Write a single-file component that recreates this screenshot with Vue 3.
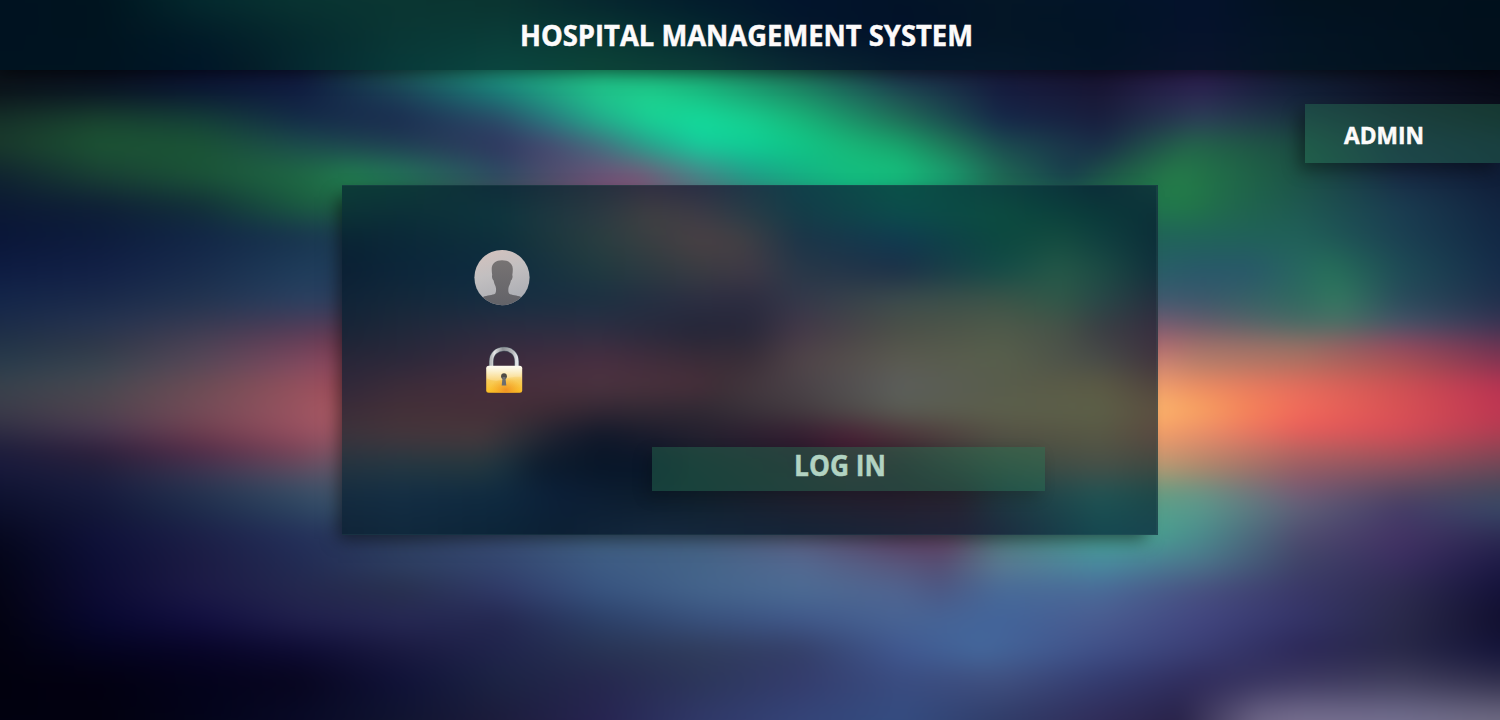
<script setup>
// Each surface is a colour mesh: rows at a given y, every row a list of "x:colour" stops.
// Rows are stacked and fade into each other from top to bottom.
const BLEED = 30

function mesh(originX, originY, rows) {
  return rows.map(([y, stops], i) => {
    const colours = stops
      .split(' ')
      .map((s) => {
        const [x, hex] = s.split(':')
        return `#${hex} ${Number(x) - originX + BLEED}px`
      })
      .join(', ')
    const style = { backgroundImage: `linear-gradient(to right, ${colours})` }
    if (i > 0) {
      const from = rows[i - 1][0] - originY + BLEED
      const to = y - originY + BLEED
      style.maskImage = `linear-gradient(to bottom, transparent ${from}px, #000 ${to}px)`
    }
    return style
  })
}

const sky = mesh(0, 0, [
  [70, '0:0a1018 100:080d1c 200:0a1030 300:10183c 400:1c5a58 500:1f9a80 600:20b880 700:1fa070 800:1f6a58 900:1a2a48 1000:171a3c 1100:171230 1200:2a1c4c 1300:101c30 1400:0c0f20 1500:050714'],
  [95, '0:0c161c 100:0c1a26 200:0c1c34 300:111f42 400:1c4058 500:1a7a78 560:20a884 600:20c48c 650:1ed28f 700:1ac184 800:1c8f68 900:1f4f54 1000:161e40 1100:191836 1150:242248 1200:2c2852 1250:1e2444 1300:14203a 1400:0e1226 1500:0a0c18'],
  [120, '0:16322a 100:194430 200:144038 300:142c48 400:1b2c50 500:2c4a68 550:287880 600:20ae8c 650:18d295 700:13dc9c 750:17d090 800:18b87a 900:207058 1000:16284a 1100:181e3e 1200:2c4058 1300:1a3440 1400:151c30 1500:0c1220'],
  [145, '0:1a3a2c 100:1c5434 200:1b5436 300:1c4c4c 400:203e54 500:303660 550:484870 600:446c80 650:24a48e 700:14ce9c 750:0ed096 800:10c888 850:18b878 900:18a46c 950:207858 1000:1c4c50 1100:1a2c48 1150:204e4a 1190:23664a 1300:1c4c42 1400:162440 1500:101c34'],
  [175, '0:102430 100:194034 200:1b5438 300:1f6a44 350:218050 400:24785a 500:2c4c64 600:6c5076 640:7a5478 700:4a8088 750:1f9c88 800:14b084 850:13c080 900:16c27e 950:1aa070 1000:1f6a54 1070:183c4c 1110:1e5848 1175:257d49 1230:206a48 1300:1c5246 1400:182a44 1500:0f1c36'],
  [205, '0:0c1a34 100:0f2036 200:123038 300:1a5c40 340:1f6444 400:1a5040 620:7c5270 850:14a07c 1000:1f6a54 1158:217a4c 1190:217848 1230:20684c 1300:1e5850 1400:1a3c50 1500:122440'],
  [235, '0:0a1638 100:0d1c3c 200:122646 300:18344e 340:1c3c54 1158:206458 1200:206458 1300:206058 1400:1b4052 1500:122844'],
  [270, '0:0e1c42 100:122046 200:182c4c 300:1e3c5a 340:203e5c 1158:285e68 1200:28586a 1250:28586a 1330:26705a 1400:1e4c56 1500:162c4a'],
  [300, '0:14264a 100:1a2a4a 200:223450 300:2a4060 340:2c4060 1158:405a70 1200:3c586c 1300:306a60 1340:337860 1400:2a4c5c 1500:20304c'],
  [325, '0:1c2c48 100:263450 200:383a52 300:4c3c58 340:543c58 1158:7a5c72 1200:6a5c6c 1300:4c6a66 1340:4c6e66 1400:485468 1500:3a3454'],
  [345, '0:223448 100:303848 200:4c4254 300:6c4058 340:783c52 1158:b06a70 1200:a2706a 1300:957066 1400:944860 1500:6a3452'],
  [365, '0:2a3c4c 100:384450 200:584858 300:804a60 340:904a60 1158:d08874 1200:b8806a 1300:b47060 1400:a85454 1500:8a3452'],
  [385, '0:38424c 100:484850 200:6c4c54 300:94505c 340:a04c5a 1158:f09c6c 1200:ee8a62 1300:e46c5c 1400:d05054 1500:b83452'],
  [410, '0:3c3c4a 100:50444e 200:744c58 300:9a5460 340:ac5a64 1158:fcb86c 1200:f8a460 1250:f68458 1300:f26c5a 1400:d85254 1500:c03652'],
  [430, '0:302e44 100:483850 200:704050 300:985060 340:a45866 1158:f8a068 1200:f09068 1300:ea5c5a 1400:d84c58 1500:b43c52'],
  [450, '0:1e1e3c 100:30203c 200:542c48 300:7c4458 340:885868 1158:d89870 1200:cc8a6c 1300:b86460 1400:b05058 1500:8e4454'],
  [470, '0:18193c 100:20203c 200:3c3450 300:5c4c60 340:605a6c 1158:b09c74 1200:a8886c 1300:945c64 1400:845060 1500:684858'],
  [490, '0:101432 100:181c40 200:263450 300:384e66 340:44566c 1158:6c9c80 1200:6c9484 1300:785a74 1400:584860 1500:44485c'],
  [510, '0:0c0f2c 100:131838 200:1e2c4c 300:2c4460 340:34506c 1158:56a08c 1200:58988c 1300:5c6078 1400:443c68 1500:384868'],
  [535, '0:070920 100:10123a 200:1c2048 300:24305a 400:2c3c5c 500:3a4c74 600:406080 700:466080 800:5c5c7c 900:5c3c60 950:644060 1000:4c7878 1100:48a090 1158:48a090 1200:4a8c8c 1300:504c70 1400:443464 1500:2e2c54'],
  [560, '0:04061a 100:0d0f36 200:1c1c44 300:222c54 400:2e4064 500:344870 600:3e5c84 700:446488 800:546890 900:5a5478 940:584c70 1000:5c7c90 1100:4890a0 1200:4c788c 1300:404468 1400:3a2e60 1500:201c48'],
  [590, '0:040416 100:0d0c34 200:1c1a46 300:24284e 400:28304e 500:303a68 600:385480 700:44648c 800:4c6c94 900:506490 940:4c5884 1000:486a98 1100:4a6a98 1200:485080 1300:3a3868 1400:2e2c50 1500:14123a'],
  [620, '0:030312 100:080830 200:120f40 300:201f4c 400:262854 500:242850 600:2c4068 700:38507c 800:40588a 900:486494 1000:42649a 1100:4a5c90 1200:424680 1300:343468 1400:2a2a4a 1500:12102f'],
  [650, '0:020210 100:040420 200:080528 300:0e0c34 400:1a1a40 500:20244c 600:283454 700:303c5c 800:343f68 900:405890 980:44689c 1100:405088 1200:3a3e74 1300:2c2858 1400:282848 1500:14143a'],
  [680, '0:02010e 100:030112 200:04031c 300:080620 400:101238 500:1c2444 600:26284e 700:2c365a 800:343c6c 900:3a4c80 1000:405080 1100:343c70 1200:302c5c 1300:3c3860 1400:403e5c 1500:302e4c'],
  [720, '0:010110 100:020110 200:03041a 300:080a26 400:101430 500:1c1c3c 600:262450 700:303868 800:344478 900:344c80 1000:303c68 1100:302c58 1180:282248 1260:706888 1300:787090 1400:747090 1500:706c84'],
])

const banner = mesh(0, 0, [
  [0, '0:001220 100:00141f 200:042a2e 300:093432 400:0a3632 500:0a3430 600:06262e 700:031c2c 800:02142c 900:021328 1000:041626 1100:021428 1200:04122c 1300:02121f 1500:01101c'],
  [35, '0:001220 100:001420 200:021c28 300:062a2e 400:0a3735 500:0a3c38 600:093834 700:052a30 800:04182c 900:02122a 1000:041626 1100:021426 1200:06132c 1300:031424 1500:01101c'],
  [70, '0:001420 100:001420 200:001628 250:041c28 300:052830 400:083a3a 500:0a4640 600:0c4438 700:0c3c38 800:0a2a34 900:061c2e 1000:061a2c 1100:041528 1200:0a152c 1300:041624 1500:02101c'],
])

const glass = mesh(342, 185, [
  [185, '342:0d3c38 400:0d3a38 500:0f2c3a 600:24303e 650:302e42 700:282e44 800:10404a 900:0a5248 1000:0c4040 1100:0c2c38 1158:103c3c'],
  [215, '342:0c3236 400:0c2f38 500:0f363e 600:2c3a42 650:404042 700:3e3c46 800:143c48 900:0c4c4c 1000:0c4c40 1100:0a3a3a 1158:0c3038'],
  [240, '342:0a2434 400:0b2838 500:0e303c 600:2a3e40 700:4a4044 740:444044 800:1c3448 900:103a50 1000:0c4840 1060:144c40 1100:104040 1158:0c2e38'],
  [270, '342:0b2034 400:0c263a 500:0e2c40 600:203a40 700:3a3c42 750:403a46 800:283848 900:1c3048 1000:144c48 1060:245848 1100:1c4c44 1158:10303c'],
  [300, '342:102438 400:14283a 500:162e42 600:1c3042 700:2c2e42 750:2c2c40 800:34384a 900:3c4c4c 1000:3c5448 1060:305848 1100:284848 1158:242e3e'],
  [330, '342:182436 400:20283a 500:2c2c40 600:2e2e42 700:242638 750:28283a 800:443848 900:4c5048 1000:505a4a 1060:485248 1100:3c3e44 1158:382e40'],
  [360, '342:282638 400:2c283a 500:3c2c3e 600:482e40 700:3a2c38 750:3a2e38 800:504448 900:5a5a50 1000:58604c 1100:484c48 1158:40343e'],
  [385, '342:30283a 400:3c2c3a 500:482e3c 600:4c3440 700:482f3a 720:403038 800:4a4248 900:5c5e5c 1000:585c4c 1100:5c5a44 1158:50443e'],
  [410, '342:3c2c38 400:443038 500:462f38 560:3c2a34 600:342834 700:302a34 800:443c40 900:5a5e54 1000:5c604c 1100:5c6048 1158:5c5040'],
  [435, '342:3c343c 400:44363c 480:48383c 520:303038 560:1c2030 600:10182a 700:241f2e 800:341c30 850:481f34 900:4c3038 1000:545044 1100:585844 1158:5a4840'],
  [465, '342:243440 400:243842 480:24383e 500:1c3440 540:0c1c2e 600:081628 650:08162a 700:14202c 800:241c2c 850:381c30 900:2c2430 1000:384840 1100:485048 1158:404840'],
  [495, '342:142c40 400:142e44 500:0f2a40 560:0c1f38 650:0c1c2c 700:10202c 800:20202e 900:281f2e 960:282430 1000:1f3840 1100:205454 1158:1c4848'],
  [535, '342:102438 400:10283c 500:0c2438 560:0c2034 650:14283e 800:142438 900:1c2438 960:20243a 1000:1c2c40 1100:144850 1158:184450'],
])
</script>

<template>
  <div class="screen">
    <div class="surface" aria-hidden="true">
      <div class="mesh"><div v-for="(s, i) in sky" :key="i" class="band" :style="s"></div></div>
    </div>

    <header class="topbar">
      <div class="surface" aria-hidden="true">
        <div class="mesh"><div v-for="(s, i) in banner" :key="i" class="band" :style="s"></div></div>
      </div>
      <h1 class="title">
        <svg width="470" height="70">
          <text x="0" y="46" textLength="453" lengthAdjust="spacingAndGlyphs">HOSPITAL MANAGEMENT SYSTEM</text>
        </svg>
      </h1>
    </header>

    <button class="admin" type="button">
      <svg width="100" height="59">
        <text x="0" y="44" textLength="80" lengthAdjust="spacingAndGlyphs" transform="translate(0 -4)">ADMIN</text>
      </svg>
    </button>

    <main class="panel">
      <div class="surface" aria-hidden="true">
        <div class="mesh"><div v-for="(s, i) in glass" :key="i" class="band" :style="s"></div></div>
      </div>
      <div class="edge"></div>
      <form class="form" @submit.prevent>
        <svg class="avatar" viewBox="0 0 56 56">
          <defs>
            <linearGradient id="disc" x1="0.3" y1="0" x2="0.6" y2="1">
              <stop offset="0" stop-color="#d2c2be" />
              <stop offset="0.4" stop-color="#c2bfc0" />
              <stop offset="1" stop-color="#a9abb2" />
            </linearGradient>
            <linearGradient id="bust" x1="0" y1="0" x2="0" y2="1">
              <stop offset="0" stop-color="#777373" />
              <stop offset="1" stop-color="#626268" />
            </linearGradient>
            <clipPath id="round"><circle cx="28" cy="27.6" r="27.6" /></clipPath>
          </defs>
          <g clip-path="url(#round)">
            <rect width="56" height="56" fill="url(#disc)" />
            <path
              d="M28 10.200C22 10.200 17.700 13 17.700 19C17.700 21.500 18 23.500 18.200 25C17.600 26.500 18.400 29.500 19.600 30.500C20 33 21 35 21.600 36.500C22.300 39 22.300 41.500 21.300 43.500C18.500 45.500 13 45 9 47V56H47V47C43 45 37.700 45.500 35 43.500C34 41.500 34.200 39 34.800 36.500C35.600 35 36.500 33 36.900 30.500C38.200 29.500 39 26.500 38.300 25C38.600 23.500 38.800 21.500 38.800 19C38.800 13 34 10.200 28 10.200Z"
              fill="url(#bust)"
            />
          </g>
        </svg>

        <svg class="lock" viewBox="0 0 38 48">
          <defs>
            <linearGradient id="steel" x1="0" y1="0" x2="1" y2="0">
              <stop offset="0" stop-color="#b9bcbd" />
              <stop offset="0.12" stop-color="#e6e6e6" />
              <stop offset="0.45" stop-color="#8d9296" />
              <stop offset="0.85" stop-color="#b8babc" />
              <stop offset="1" stop-color="#e2e4e8" />
            </linearGradient>
            <linearGradient id="brass" x1="0" y1="0" x2="0" y2="1">
              <stop offset="0" stop-color="#fffdf2" />
              <stop offset="0.2" stop-color="#fbeec4" />
              <stop offset="0.55" stop-color="#f8cc5c" />
              <stop offset="1" stop-color="#fbbe22" />
            </linearGradient>
            <radialGradient id="glow" cx="0.55" cy="0.9" r="0.45">
              <stop offset="0" stop-color="#ee8a22" stop-opacity="0.85" />
              <stop offset="1" stop-color="#f4a020" stop-opacity="0" />
            </radialGradient>
          </defs>
          <path d="M6.300 22V15.500C6.300 7.500 12 3 19 3s12.700 4.500 12.700 12.500V22" fill="none" stroke="#4a5560" stroke-width="4.600" />
          <path d="M6.300 22V15.500C6.300 7.500 12 3 19 3s12.700 4.500 12.700 12.500V22" fill="none" stroke="url(#steel)" stroke-width="3.700" />
          <rect x="1.200" y="19.800" width="36" height="27" rx="2.500" fill="url(#brass)" />
          <rect x="1.200" y="19.800" width="36" height="27" rx="2.500" fill="url(#glow)" />
          <path d="M2.200 32.500C8 35.500 14 35 19 33.300c6-2 12-3.300 17.200-2.300V21H2.200z" fill="#fff" opacity="0.2" />
          <circle cx="19" cy="30.200" r="2.900" fill="#4f4c46" />
          <path d="M17.600 31h2.800l.9 8.400h-4.600z" fill="#6d6e70" />
        </svg>

        <button class="login" type="submit">
          <svg width="110" height="44">
            <text x="0" y="29" textLength="92" lengthAdjust="spacingAndGlyphs">LOG IN</text>
          </svg>
        </button>
      </form>
    </main>
  </div>
</template>

<style>
body {
  margin: 0;
  overflow: hidden;
}
</style>

<style scoped>
.screen {
  position: relative;
  display: flex;
  flex-direction: column;
  width: 1500px;
  height: 720px;
  overflow: hidden;
  background: #101838;
  font-family: 'Open Sans', 'Noto Sans', sans-serif;
}

.surface {
  position: absolute;
  inset: 0;
  overflow: hidden;
}

.mesh {
  position: absolute;
  inset: -30px;
  filter: blur(10px);
}

.band {
  position: absolute;
  inset: 0;
}

.topbar {
  position: relative;
  flex: none;
  height: 70px;
  box-shadow: 0 2px 16px rgba(0, 0, 0, 0.6);
}

.title {
  position: relative;
  margin: 0 0 0 520px;
  height: 70px;
}

svg {
  display: block;
  overflow: visible;
}

text {
  font-family: 'Open Sans', 'Noto Sans', sans-serif;
  font-weight: 700;
  stroke-width: 0.5px;
}

.title text {
  font-size: 29px;
  fill: #fdfbfb;
  stroke: #fdfbfb;
}

button {
  border: 0;
  border-radius: 0;
  padding: 0;
  background: rgba(40, 119, 85, 0.4);
}

.admin {
  position: relative;
  flex: none;
  align-self: flex-end;
  width: 195px;
  height: 59px;
  margin-top: 34px;
  padding-left: 39px;
  box-shadow: -6px 7px 16px rgba(0, 0, 0, 0.38);
}

.admin text {
  font-size: 24px;
  fill: #fdfbfb;
  stroke: #fdfbfb;
}

.panel {
  position: relative;
  flex: none;
  width: 816px;
  height: 350px;
  margin: 22px 0 0 342px;
  box-shadow: -8px 8px 16px -4px rgba(0, 0, 0, 0.5);
}

.edge {
  position: absolute;
  inset: 0;
  box-shadow: inset -1px 0 0 1px rgba(70, 110, 115, 0.16);
}

.form {
  position: relative;
  display: grid;
  grid-template-columns: 178px 393px;
  grid-template-rows: 56px 48px 44px;
  row-gap: 0;
  padding: 65px 0 0 132px;
}

.avatar {
  grid-area: 1 / 1;
  width: 56px;
  height: 56px;
}

.lock {
  grid-area: 2 / 1;
  width: 38px;
  height: 48px;
  margin: 40px 0 0 11px;
}

.login {
  grid-area: 3 / 2;
  width: 393px;
  height: 44px;
  margin-top: 93px;
  padding-left: 142px;
  box-shadow: -5px 6px 16px rgba(0, 0, 0, 0.2);
}

.login text {
  font-size: 29px;
  fill: #b2d3c2;
  stroke: #b2d3c2;
}
</style>
